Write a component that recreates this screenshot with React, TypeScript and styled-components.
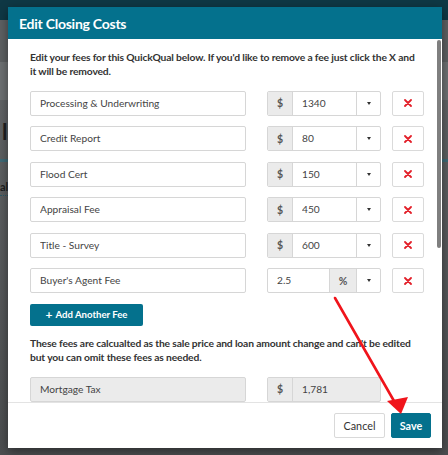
import React from "react";
import styled, { createGlobalStyle, css } from "styled-components";

const Global = createGlobalStyle`
  html, body { margin: 0; padding: 0; }
  body { width: 448px; height: 455px; overflow: hidden; background: #5a5d5f; font-family: Lato, "Open Sans", sans-serif; }
  * { box-sizing: border-box; }
`;

const FONT = `Lato, "Open Sans", sans-serif`;

const Stage = styled.div`
  position: relative;
  width: 448px;
  height: 455px;
  overflow: hidden;
`;

/* ---------- dimmed page behind the dialog ---------- */
const Page = styled.div`
  display: flex;
  flex-direction: column;
  height: 100%;
  background: linear-gradient(#66696b, #4c4e50);
`;
const PageTopBar = styled.div`
  height: 20px;
  background: #0f3845;
`;
const PageSubBar = styled.div`
  height: 42px;
  background: #5e6163;
`;
const PageBand = styled.div`
  height: 38px;
  background: #6e7173;
`;
const PageHeading = styled.div`
  height: 62px;
  padding: 22px 0 0 2px;
  font: 700 22px ${FONT};
  color: #1e1f20;
  line-height: 20px;
  border-bottom: 3px solid #3f6b77;
`;
const PageTab = styled.div`
  padding: 18px 0 0 0;
  font: 700 11px ${FONT};
  color: #1d1e1f;
  span { border-bottom: 1px dotted #2b5966; padding-bottom: 2px; }
`;

/* ---------- dialog ---------- */
const Modal = styled.div`
  position: absolute;
  left: 8px;
  top: 7px;
  width: 434px;
  height: 441px;
  background: #fff;
  display: flex;
  flex-direction: column;
  box-shadow: 0 3px 10px rgba(0, 0, 0, 0.45);
  font-family: ${FONT};
`;
const Header = styled.div`
  height: 32px;
  flex: none;
  background: #04718d;
  color: #fff;
  font: 700 14px ${FONT};
  letter-spacing: -0.25px;
  display: flex;
  align-items: center;
  padding-left: 11px;
`;
const Body = styled.div`
  position: relative;
  flex: 1;
  overflow: hidden;
  padding: 11px 0 0 22px;
`;
const Scrollbar = styled.div`
  position: absolute;
  right: 1px;
  top: 1px;
  width: 4px;
  height: 208px;
  border-radius: 2px;
  background: #7f7f7f;
`;
const Paragraph = styled.p`
  margin: 0;
  white-space: nowrap;
  font: 700 10.3px/14px ${FONT};
  letter-spacing: -0.15px;
  color: #333;
`;
const FeeList = styled.div`
  display: flex;
  flex-direction: column;
  gap: 10.5px;
  margin-top: 12.5px;
`;
const Row = styled.div`
  display: flex;
  height: 25px;
`;
const fieldText = css`
  font: 400 10.2px ${FONT};
  color: #444;
`;
const NameInput = styled.input<{ $disabled?: boolean }>`
  ${fieldText};
  width: 216px;
  height: 100%;
  border: 1px solid #d6d6d6;
  border-radius: 2px;
  padding: 0 0 1px 9px;
  outline: none;
  background: ${(p) => (p.$disabled ? "#ebebeb" : "#fff")};
`;
const AmountGroup = styled.div<{ $disabled?: boolean }>`
  display: flex;
  width: 114px;
  margin-left: 21px;
  border: 1px solid #d6d6d6;
  border-radius: 2px;
  overflow: hidden;
  background: ${(p) => (p.$disabled ? "#ebebeb" : "#fff")};
`;
const Addon = styled.div<{ $w: number; $side: "left" | "right" }>`
  width: ${(p) => p.$w}px;
  flex: none;
  display: flex;
  align-items: center;
  justify-content: center;
  background: #ebebeb;
  color: #555;
  font: 700 10.5px ${FONT};
  ${(p) =>
    p.$side === "left"
      ? css`border-right: 1px solid #d6d6d6;`
      : css`border-left: 1px solid #d6d6d6;`}
`;
const AmountInput = styled.input`
  ${fieldText};
  flex: 1;
  min-width: 0;
  border: none;
  outline: none;
  background: transparent;
  padding: 0 0 1px 9px;
`;
const CaretButton = styled.div`
  width: 24px;
  flex: none;
  border-left: 1px solid #d6d6d6;
  display: flex;
  align-items: center;
  justify-content: center;
  &::after {
    content: "";
    border-left: 2.5px solid transparent;
    border-right: 2.5px solid transparent;
    border-top: 3px solid #333;
  }
`;
const RemoveButton = styled.button`
  width: 32px;
  height: 100%;
  margin-left: 11px;
  border: 1px solid #dadada;
  border-radius: 2px;
  background: #fff;
  padding: 0;
  display: flex;
  align-items: center;
  justify-content: center;
`;
const AddButton = styled.button`
  margin-top: 10.5px;
  width: 113px;
  height: 22px;
  border: none;
  border-radius: 2px;
  background: #04718d;
  color: #fff;
  font: 700 9.6px ${FONT};
  display: flex;
  align-items: center;
  justify-content: center;
  gap: 3px;
  padding: 0;
  span { font-size: 12px; line-height: 10px; }
`;
const Note = styled(Paragraph)`
  margin-top: 10px;
`;
const FixedRow = styled(Row)`
  margin-top: 13px;
`;
const Footer = styled.div`
  height: 46px;
  flex: none;
  border-top: 1px solid #e3e3e3;
  display: flex;
  align-items: center;
  justify-content: flex-end;
  gap: 6px;
  padding: 0 11px 0 0;
`;
const FooterButton = styled.button<{ $primary?: boolean }>`
  height: 25px;
  border-radius: 2px;
  padding: 0;
  font: ${(p) => (p.$primary ? 700 : 400)} 10.8px ${FONT};
  ${(p) =>
    p.$primary
      ? css`
          width: 40px;
          background: #04718d;
          border: 1px solid #04718d;
          color: #fff;
        `
      : css`
          width: 51px;
          background: #fff;
          border: 1px solid #d9d9d9;
          color: #333;
        `}
`;
const Annotation = styled.svg`
  position: absolute;
  left: 0;
  top: 0;
  pointer-events: none;
`;

const XIcon = () => (
  <svg width="8" height="8" viewBox="0 0 8 8">
    <path d="M1 1L7 7M7 1L1 7" stroke="#e3202a" strokeWidth="1.8" strokeLinecap="round" />
  </svg>
);

type Fee = { name: string; amount: string; unit: "$" | "%" };
const fees: Fee[] = [
  { name: "Processing & Underwriting", amount: "1340", unit: "$" },
  { name: "Credit Report", amount: "80", unit: "$" },
  { name: "Flood Cert", amount: "150", unit: "$" },
  { name: "Appraisal Fee", amount: "450", unit: "$" },
  { name: "Title - Survey", amount: "600", unit: "$" },
  { name: "Buyer's Agent Fee", amount: "2.5", unit: "%" },
];

const FeeRow = ({ fee }: { fee: Fee }) => (
  <Row>
    <NameInput readOnly value={fee.name} />
    <AmountGroup>
      {fee.unit === "$" ? (
        <>
          <Addon $w={25} $side="left">$</Addon>
          <AmountInput readOnly value={fee.amount} />
        </>
      ) : (
        <>
          <AmountInput readOnly value={fee.amount} />
          <Addon $w={27} $side="right">%</Addon>
        </>
      )}
      <CaretButton />
    </AmountGroup>
    <RemoveButton aria-label="Remove fee">
      <XIcon />
    </RemoveButton>
  </Row>
);

export default function App() {
  return (
    <Stage>
      <Global />
      <Page>
        <PageTopBar />
        <PageSubBar />
        <PageBand />
        <PageHeading>l</PageHeading>
        <PageTab>
          <span>al</span>
        </PageTab>
      </Page>
      <Modal>
        <Header>Edit Closing Costs</Header>
        <Body>
          <Paragraph>
            Edit your fees for this QuickQual below. If you'd like to remove a fee just click the X and
            <br />
            it will be removed.
          </Paragraph>
          <FeeList>
            {fees.map((f) => (
              <FeeRow key={f.name} fee={f} />
            ))}
          </FeeList>
          <AddButton>
            <span>+</span> Add Another Fee
          </AddButton>
          <Note>
            These fees are calcualted as the sale price and loan amount change and can't be edited
            <br />
            but you can omit these fees as needed.
          </Note>
          <FixedRow>
            <NameInput readOnly $disabled value="Mortgage Tax" />
            <AmountGroup $disabled>
              <Addon $w={25} $side="left">$</Addon>
              <AmountInput readOnly value="1,781" />
            </AmountGroup>
          </FixedRow>
          <Scrollbar />
        </Body>
        <Footer>
          <FooterButton>Cancel</FooterButton>
          <FooterButton $primary>Save</FooterButton>
        </Footer>
      </Modal>
      <Annotation width="448" height="455" viewBox="0 0 448 455">
        <line x1="335" y1="298" x2="394" y2="401" stroke="#f0141b" strokeWidth="2.6" strokeLinecap="round" />
        <polygon points="387,401 408,397 401,414" fill="#f0141b" />
      </Annotation>
    </Stage>
  );
}
